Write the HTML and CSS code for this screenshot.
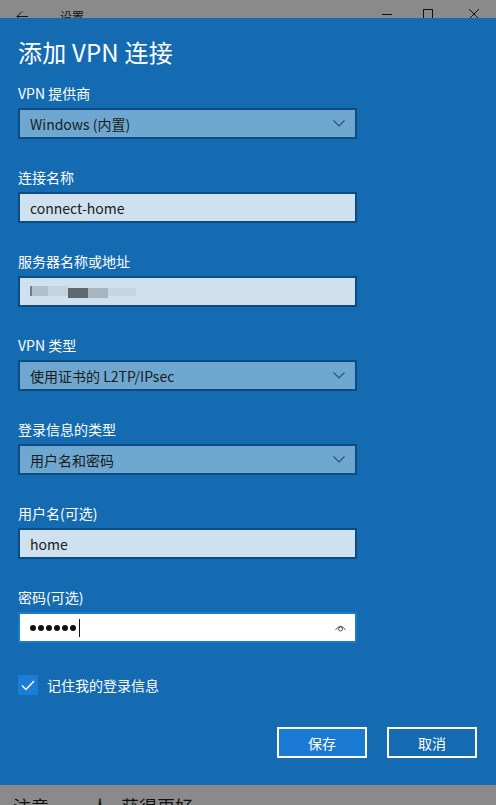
FILE: index.html
```html
<!DOCTYPE html>
<html lang="zh-CN">
<head>
<meta charset="utf-8">
<title>设置</title>
<link rel="stylesheet" href="styles.css">
</head>
<body>
<div class="titlebar">
  <div class="tb-left">
    <svg class="tb-back" width="12" height="11" viewBox="0 0 12 11"><path d="M6 0.5 L1 5.5 L6 10.5 M1 5.5 H12" fill="none" stroke="#111" stroke-width="1"/></svg>
    <span class="tb-title">设置</span>
  </div>
  <div class="tb-right">
    <svg class="tb-min" width="10" height="10" viewBox="0 0 10 10"><path d="M0 5.5 H10" stroke="#111" stroke-width="1"/></svg>
    <svg class="tb-max" width="10" height="10" viewBox="0 0 10 10"><rect x="0.5" y="0.5" width="9" height="9" fill="none" stroke="#111" stroke-width="1"/></svg>
    <svg class="tb-close" width="10" height="10" viewBox="0 0 10 10"><path d="M0 0 L10 10 M10 0 L0 10" stroke="#111" stroke-width="1"/></svg>
  </div>
</div>

<div class="panel">
  <h1 class="heading">添加 VPN 连接</h1>

  <div class="fields">
    <div class="field">
      <div class="label">VPN 提供商</div>
      <div class="control select"><span>Windows (内置)</span><svg class="chev" width="12" height="7" viewBox="0 0 12 7"><path d="M0.5 0.5 L6 6 L11.5 0.5" fill="none" stroke="#33506b" stroke-width="1.2"/></svg></div>
    </div>
    <div class="field">
      <div class="label">连接名称</div>
      <div class="control input"><span>connect-home</span></div>
    </div>
    <div class="field">
      <div class="label">服务器名称或地址</div>
      <div class="control input">
        <div class="blur">
          <i class="b1"></i><i class="b2"></i><i class="b3"></i><i class="b4"></i><i class="b5"></i><i class="b6"></i>
        </div>
      </div>
    </div>
    <div class="field">
      <div class="label">VPN 类型</div>
      <div class="control select"><span>使用证书的 L2TP/IPsec</span><svg class="chev" width="12" height="7" viewBox="0 0 12 7"><path d="M0.5 0.5 L6 6 L11.5 0.5" fill="none" stroke="#33506b" stroke-width="1.2"/></svg></div>
    </div>
    <div class="field">
      <div class="label">登录信息的类型</div>
      <div class="control select"><span>用户名和密码</span><svg class="chev" width="12" height="7" viewBox="0 0 12 7"><path d="M0.5 0.5 L6 6 L11.5 0.5" fill="none" stroke="#33506b" stroke-width="1.2"/></svg></div>
    </div>
    <div class="field">
      <div class="label">用户名(可选)</div>
      <div class="control input"><span>home</span></div>
    </div>
    <div class="field">
      <div class="label">密码(可选)</div>
      <div class="control password">
        <div class="dots"><i></i><i></i><i></i><i></i><i></i><i></i><b class="caret"></b></div>
        <svg class="eye" width="11" height="8" viewBox="0 0 11 8"><path d="M0.5 6 Q5.5 -1.5 10.5 6" fill="none" stroke="#555" stroke-width="1"/><circle cx="5.5" cy="5" r="2" fill="none" stroke="#555" stroke-width="1"/></svg>
      </div>
    </div>
  </div>

  <label class="check">
    <span class="box"><svg width="14" height="11" viewBox="0 0 14 11"><path d="M1 5.5 L5 9.5 L13 1" fill="none" stroke="#fff" stroke-width="1.5"/></svg></span>
    <span class="check-text">记住我的登录信息</span>
  </label>

  <div class="actions">
    <button class="btn primary">保存</button>
    <button class="btn">取消</button>
  </div>
</div>

<div class="below">注意 、 人 获得更好</div>
</body>
</html>
```

FILE: styles.css
```css
* { box-sizing: border-box; }
html, body { margin: 0; padding: 0; }
body {
  width: 496px;
  height: 805px;
  overflow: hidden;
  background: #8a8a8a;
  font-family: "Noto Sans CJK SC", "Noto Sans", sans-serif;
}
.titlebar {
  height: 18px;
  overflow: hidden;
  display: flex;
  justify-content: space-between;
  align-items: flex-start;
  background: #8a8a8a;
}
.tb-left {
  display: flex;
  align-items: center;
  padding: 8px 0 0 16px;
}
.tb-back { display: block; }
.tb-title {
  margin-left: 32px;
  font-size: 12px;
  line-height: 14px;
  color: #111;
  margin-top: 2px;
}
.tb-right {
  display: flex;
  padding: 9px 17px 0 0;
}
.tb-right svg { display: block; }
.tb-max { margin-left: 31px; }
.tb-close { margin-left: 36px; }

.panel {
  height: 767px;
  background: #156bb2;
  padding: 18px 19px 0 18px;
  color: #fff;
}
.heading {
  margin: 0;
  font-size: 24px;
  line-height: 32px;
  font-weight: 400;
  letter-spacing: 0.2px;
}
.fields {
  margin-top: 15px;
  display: flex;
  flex-direction: column;
  gap: 28px;
}
.field {
  display: flex;
  flex-direction: column;
  gap: 5px;
}
.label {
  font-size: 14px;
  line-height: 20px;
}
.control {
  width: 339px;
  height: 31px;
  border: 2px solid #0e4b80;
  display: flex;
  align-items: center;
  justify-content: space-between;
  padding: 0 9px 0 10px;
  font-size: 14px;
  color: #1b1b1b;
}
.select { background: #6ea8d0; }
.input { background: #cfe1ee; }
.password { background: #fff; border-color: #1a7ad3; }
.chev { display: block; margin-right: 1px; }

.blur { display: flex; align-items: flex-start; height: 12px; }
.blur i { display: block; height: 10px; }
.blur .b1 { width: 2px; background: #6f7c88; }
.blur .b2 { width: 16px; background: #b2c0cb; }
.blur .b3 { width: 20px; background: #c4d3de; }
.blur .b4 { width: 20px; background: #5f6770; margin-top: 2px; }
.blur .b5 { width: 20px; background: #a8b5c0; margin-top: 2px; }
.blur .b6 { width: 28px; background: #c6d6e2; height: 8px; margin-top: 2px; }

.dots { display: flex; align-items: center; gap: 2px; }
.dots i {
  display: block;
  width: 6px;
  height: 6px;
  border-radius: 50%;
  background: #111;
}
.caret {
  display: block;
  width: 1px;
  height: 18px;
  background: #111;
  margin-left: 1px;
}
.eye { display: block; }

.check {
  margin-top: 32px;
  display: flex;
  align-items: center;
  gap: 9px;
}
.box {
  width: 20px;
  height: 20px;
  background: #1b7dd6;
  display: flex;
  align-items: center;
  justify-content: center;
}
.box svg { display: block; }
.check-text { font-size: 14px; line-height: 20px; }

.actions {
  margin-top: 32px;
  display: flex;
  justify-content: flex-end;
  gap: 20px;
}
.btn {
  width: 90px;
  height: 31px;
  border: 2px solid #fff;
  background: transparent;
  color: #fff;
  font-family: "Noto Sans CJK SC", "Noto Sans", sans-serif;
  font-size: 14px;
  padding: 0;
}
.btn.primary { background: #1a7ad3; }

.below {
  padding: 11px 0 0 13px;
  font-size: 18px;
  line-height: 20px;
  color: #111;
  word-spacing: 8px;
}
```
